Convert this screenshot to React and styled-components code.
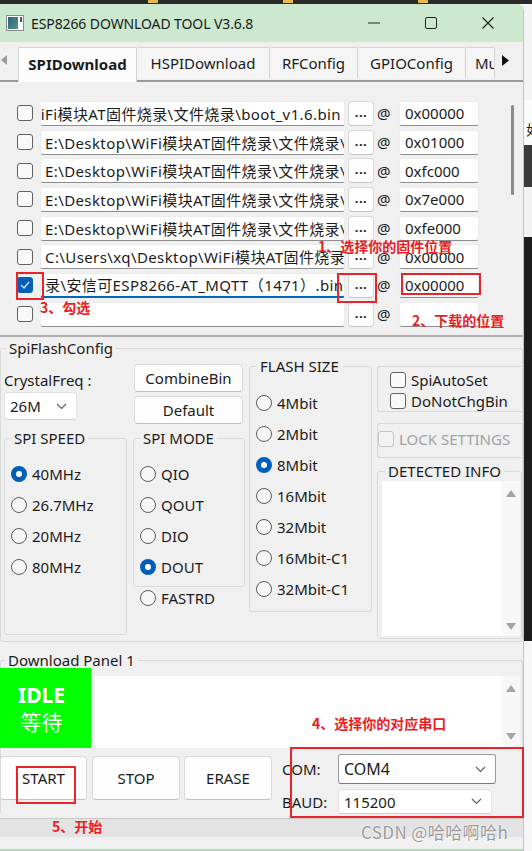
import React from 'react'
import styled, { createGlobalStyle } from 'styled-components'

const GlobalStyle = createGlobalStyle`
  * { box-sizing: border-box; }
  html, body { margin: 0; padding: 0; background: #f3f3f3; }
  body {
    font-family: "Noto Sans", "Noto Sans CJK SC", sans-serif;
    color: #1b1b1b;
  }
`

const Page = styled.div`
  position: relative;
  width: 532px;
  height: 851px;
  overflow: hidden;
  display: flex;
  flex-direction: column;
`

const TopStrip = styled.div`
  height: 4px;
  flex-shrink: 0;
  background: #2b2b2b;
  display: flex;
  gap: 125px;
  padding-left: 148px;
`
const Folder = styled.span`
  width: 10px;
  height: 3px;
  background: #e5b94a;
`

const Desk = styled.div`
  flex: 1;
  display: flex;
`

const Window = styled.div`
  width: 524px;
  flex-shrink: 0;
  display: flex;
  flex-direction: column;
  background: #f0f0f0;
  border-right: 1px solid #a9d4b0;
  border-bottom: 2px solid #b4dbba;
  border-top-right-radius: 8px;
  overflow: hidden;
`

const Side = styled.div`
  flex: 1;
  display: flex;
  flex-direction: column;
  overflow: hidden;
`
const SideBlock = styled.div`
  height: ${p => p.$h}px;
  flex: ${p => (p.$grow ? 1 : 'none')};
  background: ${p => p.$bg};
  font-size: 14px;
  line-height: 20px;
  padding-top: ${p => p.$pt || 0}px;
  padding-left: 2px;
  white-space: nowrap;
`

/* ---------- title bar ---------- */
const TitleBar = styled.div`
  height: 38px;
  flex-shrink: 0;
  display: flex;
  align-items: center;
  padding-left: 6px;
  background: #cce8cf;
  font-size: 14px;
`
const TitleText = styled.span`
  margin-left: 7px;
  letter-spacing: -0.1px;
`
const Controls = styled.div`
  margin-left: auto;
  margin-right: 7px;
  display: flex;
`
const Ctl = styled.div`
  width: 57px;
  height: 38px;
  display: flex;
  align-items: center;
  justify-content: center;
`

/* ---------- tabs ---------- */
const TabBar = styled.div`
  height: 40px;
  flex-shrink: 0;
  display: flex;
  align-items: flex-end;
  border-bottom: 2px solid #9a9a9a;
`
const Arrow = styled.div`
  width: ${p => p.$w}px;
  height: 36px;
  margin-bottom: 2px;
  display: flex;
  align-items: center;
  justify-content: ${p => p.$justify || 'center'};
  padding-left: ${p => p.$pl || 0}px;
`
const Tab = styled.div`
  width: ${p => p.$w}px;
  height: ${p => (p.$active ? 35 : 31)}px;
  margin-bottom: ${p => (p.$active ? -2 : 2)}px;
  padding-bottom: ${p => (p.$active ? 2 : 0)}px;
  display: flex;
  align-items: center;
  justify-content: ${p => (p.$clip ? 'flex-start' : 'center')};
  padding-left: ${p => (p.$clip ? 9 : 0)}px;
  overflow: hidden;
  white-space: nowrap;
  background: ${p => (p.$active ? '#fcfcfc' : '#f5f5f5')};
  border: 1px solid #d3d3d3;
  border-bottom: none;
  border-left: ${p => (p.$first ? '1px solid #d3d3d3' : 'none')};
  border-radius: 2px 2px 0 0;
  font-size: 15px;
  font-weight: ${p => (p.$active ? 700 : 400)};
`

/* ---------- file list ---------- */
const FileList = styled.div`
  height: 255px;
  flex-shrink: 0;
  display: flex;
  border-bottom: 2px solid #b0b0b0;
`
const Rows = styled.div`
  padding-top: 17px;
  padding-left: 17px;
`
const Row = styled.div`
  height: 28.7px;
  display: flex;
  align-items: center;
`
const Check = styled.span`
  width: 16px;
  height: 16px;
  flex-shrink: 0;
  border-radius: 3px;
  border: 1px solid ${p => (p.$on ? '#005fb8' : p.$off ? '#c5c5c5' : '#616161')};
  background: ${p => (p.$on ? '#005fb8' : p.$off ? '#f3f3f3' : '#f9f9f9')};
  display: flex;
  align-items: center;
  justify-content: center;
`
const PathBox = styled.div`
  width: 305px;
  height: 25px;
  margin-left: 7px;
  display: flex;
  align-items: center;
  justify-content: ${p => (p.$end ? 'flex-end' : 'flex-start')};
  padding: 0 ${p => (p.$end ? 3 : 0)}px 0 4px;
  overflow: hidden;
  white-space: nowrap;
  background: #fff;
  border: 1px solid #ececec;
  border-bottom: ${p => (p.$focus ? '2px solid #0067c0' : '1px solid #8d8d8d')};
  border-radius: 3px;
  font-size: 15px;
`
const PathText = styled.span`
  flex-shrink: 0;
  letter-spacing: 0.4px;
`
const DotsButton = styled.div`
  width: 26px;
  height: 25px;
  margin-left: 3px;
  display: flex;
  align-items: center;
  justify-content: center;
  padding-bottom: 3px;
  background: #fdfdfd;
  border: 1px solid #dadada;
  border-bottom-color: #c4c4c4;
  border-radius: 4px;
  font-size: 13px;
  font-weight: 700;
  letter-spacing: 0.5px;
`
const At = styled.span`
  width: 25px;
  padding-left: 3px;
  font-size: 15px;
`
const AddrBox = styled.div`
  width: 80px;
  height: 25px;
  padding-left: 5px;
  display: flex;
  align-items: center;
  background: #fff;
  border: 1px solid #ececec;
  border-bottom-color: #8d8d8d;
  border-radius: 3px;
  font-size: 15px;
`
const ScrollTrack = styled.div`
  margin-left: auto;
  width: 18px;
  padding-top: 23px;
  padding-left: 6px;
`
const Thumb = styled.div`
  width: 3px;
  height: 90px;
  border-radius: 2px;
  background: #8a8a8a;
`

/* ---------- group boxes ---------- */
const Group = styled.fieldset`
  margin: 0;
  margin-top: ${p => p.$mt || 0}px;
  padding: 0;
  min-width: 0;
  width: ${p => (p.$w ? `${p.$w}px` : 'auto')};
  height: ${p => (p.$h ? `${p.$h}px` : 'auto')};
  border: 1px solid #dadada;
  border-bottom: ${p => (p.$open ? 'none' : '1px solid #dadada')};
  border-radius: 3px;
  flex-shrink: 0;
`
const Legend = styled.legend`
  margin-left: ${p => p.$x}px;
  padding: 0 3px;
  font-size: 15px;
  line-height: ${p => p.$lh || 20}px;
  white-space: nowrap;
`

const FlashSection = styled.div`
  height: 308px;
  flex-shrink: 0;
  padding-top: 3px;
`
const Columns = styled.div`
  display: flex;
  align-items: flex-start;
  padding-left: 3px;
`
const Col = styled.div`
  width: ${p => (p.$w ? `${p.$w}px` : 'auto')};
  flex: ${p => (p.$w ? 'none' : 1)};
  margin-left: ${p => p.$ml || 0}px;
  display: flex;
  flex-direction: column;
`
const Label = styled.div`
  margin-top: ${p => p.$mt || 0}px;
  font-size: 15px;
  line-height: 16px;
  white-space: nowrap;
`
const Select = styled.div`
  width: ${p => p.$w}px;
  height: ${p => p.$h}px;
  margin-top: ${p => p.$mt || 0}px;
  display: flex;
  align-items: center;
  justify-content: space-between;
  padding: 0 9px 0 5px;
  background: #fff;
  border: 1px solid ${p => (p.$focus ? '#9a9a9a' : '#e2e2e2')};
  border-bottom-color: ${p => (p.$focus ? '#7a7a7a' : '#d0d0d0')};
  border-radius: 3px;
  font-size: ${p => p.$fs || 15}px;
`
const Button = styled.div`
  width: ${p => p.$w}px;
  height: ${p => p.$h}px;
  margin-top: ${p => p.$mt || 0}px;
  margin-left: ${p => p.$ml || 0}px;
  flex-shrink: 0;
  display: flex;
  align-items: center;
  justify-content: center;
  background: #fdfdfd;
  border: 1px solid #d8d8d8;
  border-bottom-color: #c2c2c2;
  border-radius: 4px;
  font-size: 15px;
`
const OptionList = styled.div`
  padding-top: ${p => p.$pt}px;
  padding-left: ${p => p.$pl}px;
`
const Option = styled.div`
  height: ${p => p.$h || 31}px;
  padding-left: ${p => p.$pl || 0}px;
  display: flex;
  align-items: center;
  gap: 5px;
  font-size: 15px;
  white-space: nowrap;
  color: ${p => (p.$dim ? '#a3a3a3' : '#1b1b1b')};
`
const Dot = styled.span`
  width: 16px;
  height: 16px;
  flex-shrink: 0;
  border-radius: 50%;
  border: ${p => (p.$on ? '5px solid #005fb8' : '1px solid #5c5c5c')};
  background: ${p => (p.$on ? '#fff' : '#f6f6f6')};
`
const Frame = styled.div`
  height: ${p => p.$h}px;
  margin-top: ${p => p.$mt || 0}px;
  padding: ${p => p.$pad || '0'};
  border: 1px solid #dadada;
  border-right: none;
  border-radius: 3px 0 0 3px;
`
const TextPane = styled.div`
  height: ${p => p.$h}px;
  margin: ${p => p.$m || '0'};
  flex: ${p => (p.$grow ? 1 : 'none')};
  display: flex;
  justify-content: flex-end;
  background: #fff;
`
const PaneScroll = styled.div`
  width: 18px;
  display: flex;
  flex-direction: column;
  justify-content: space-between;
  align-items: center;
  padding: ${p => p.$pad};
  background: #f7f7f7;
`

/* ---------- download panel ---------- */
const DownloadSection = styled.div`
  height: 173px;
  flex-shrink: 0;
  padding-top: 7px;
`
const StateRow = styled.div`
  display: flex;
  align-items: flex-start;
`
const StateBox = styled.div`
  width: 91px;
  height: 80px;
  margin-left: -1px;
  display: flex;
  flex-direction: column;
  align-items: center;
  justify-content: center;
  padding-right: 8px;
  background: #00ff00;
  color: #fff;
  font-family: "Noto Sans CJK SC", sans-serif;
  font-size: 21px;
  line-height: 26px;
`
const Bold = styled.span`
  font-weight: 700;
  font-family: "Noto Sans", sans-serif;
`
const ActionRow = styled.div`
  margin-top: 6px;
  display: flex;
  align-items: flex-start;
`
const PortGrid = styled.div`
  margin-left: 10px;
  display: grid;
  grid-template-columns: 56px auto;
  row-gap: 5px;
  align-items: center;
  font-size: 15px;
`

const StatusBar = styled.div`
  height: 19px;
  flex-shrink: 0;
  background: #e3e3e3;
  border-top: 1px solid #c8c8c8;
`
const Filler = styled.div`
  flex: 1;
`

/* ---------- overlays ---------- */
const Note = styled.div`
  position: absolute;
  left: ${p => p.$x}px;
  top: ${p => p.$y}px;
  color: #ec1c24;
  font-family: "Noto Sans CJK SC", sans-serif;
  font-size: 14px;
  font-weight: 700;
  line-height: 18px;
  white-space: nowrap;
`
const Mark = styled.div`
  position: absolute;
  left: ${p => p.$x}px;
  top: ${p => p.$y}px;
  width: ${p => p.$w}px;
  height: ${p => p.$h}px;
  border: 2px solid #e8232b;
`
const Watermark = styled.div`
  position: absolute;
  left: 361px;
  top: 821px;
  font-family: "Noto Sans CJK SC", sans-serif;
  font-size: 17px;
  line-height: 22px;
  color: #9b9b9b;
  letter-spacing: 0.4px;
  text-shadow: 0 0 2px #fff, 0 0 1px #fff;
  white-space: nowrap;
`

const Chevron = () => (
  <svg width="11" height="7" viewBox="0 0 11 7">
    <polyline points="1,1 5.5,5.5 10,1" fill="none" stroke="#606060" strokeWidth="1.2" />
  </svg>
)
const Tri = ({ up }) => (
  <svg width="10" height="7" viewBox="0 0 10 7">
    <polygon points={up ? '0,7 5,0 10,7' : '0,0 10,0 5,7'} fill="#a5a5a5" />
  </svg>
)
const Tick = () => (
  <svg width="10" height="8" viewBox="0 0 10 8">
    <polyline points="1,4 4,7 9,1" fill="none" stroke="#cfe3f7" strokeWidth="1.4" />
  </svg>
)

const files = [
  { path: 'E:\\Desktop\\WiFi模块AT固件烧录\\文件烧录\\boot_v1.6.bin', addr: '0x00000', end: true },
  { path: 'E:\\Desktop\\WiFi模块AT固件烧录\\文件烧录\\', addr: '0x01000' },
  { path: 'E:\\Desktop\\WiFi模块AT固件烧录\\文件烧录\\', addr: '0xfc000' },
  { path: 'E:\\Desktop\\WiFi模块AT固件烧录\\文件烧录\\', addr: '0x7e000' },
  { path: 'E:\\Desktop\\WiFi模块AT固件烧录\\文件烧录\\', addr: '0xfe000' },
  { path: 'C:\\Users\\xq\\Desktop\\WiFi模块AT固件烧录', addr: '0x00000' },
  { path: '录\\安信可ESP8266-AT_MQTT（1471）.bin', addr: '0x00000', on: true, focus: true },
  { path: '', addr: '' },
]

const speeds = ['40MHz', '26.7MHz', '20MHz', '80MHz']
const modes = ['QIO', 'QOUT', 'DIO', 'DOUT']
const sizes = ['4Mbit', '2Mbit', '8Mbit', '16Mbit', '32Mbit', '16Mbit-C1', '32Mbit-C1']

const App = () => (
  <Page>
    <GlobalStyle />
    <TopStrip>
      <Folder />
      <Folder />
      <Folder />
    </TopStrip>
    <Desk>
      <Window>
        <TitleBar>
          <svg width="18" height="16" viewBox="0 0 18 16">
            <defs>
              <linearGradient id="ic" x1="0" y1="0" x2="1" y2="1">
                <stop offset="0" stopColor="#2f5f8f" />
                <stop offset="1" stopColor="#4f9a78" />
              </linearGradient>
            </defs>
            <rect x="0.5" y="0.5" width="17" height="15" fill="#fff" stroke="#8a8a8a" />
            <rect x="2" y="2" width="10" height="12" fill="url(#ic)" />
            <rect x="14" y="2" width="2" height="5" fill="#555" />
          </svg>
          <TitleText>ESP8266 DOWNLOAD TOOL V3.6.8</TitleText>
          <Controls>
            <Ctl>
              <svg width="12" height="12" viewBox="0 0 12 12">
                <line x1="0" y1="6" x2="12" y2="6" stroke="#222" strokeWidth="1" />
              </svg>
            </Ctl>
            <Ctl>
              <svg width="12" height="12" viewBox="0 0 12 12">
                <rect x="0.5" y="0.5" width="11" height="11" rx="1.5" fill="none" stroke="#222" />
              </svg>
            </Ctl>
            <Ctl>
              <svg width="12" height="12" viewBox="0 0 12 12">
                <path d="M0.5 0.5 L11.5 11.5 M11.5 0.5 L0.5 11.5" stroke="#222" strokeWidth="1.1" />
              </svg>
            </Ctl>
          </Controls>
        </TitleBar>

        <TabBar>
          <Arrow $w={18} $justify="flex-start" $pl={1}>
            <svg width="6" height="10" viewBox="0 0 6 10">
              <polygon points="6,0 0,5 6,10" fill="#9c9c9c" />
            </svg>
          </Arrow>
          <Tab $w={119} $active $first>SPIDownload</Tab>
          <Tab $w={133}>HSPIDownload</Tab>
          <Tab $w={88}>RFConfig</Tab>
          <Tab $w={108}>GPIOConfig</Tab>
          <Tab $w={29} $clip>Multi</Tab>
          <Arrow $w={20}>
            <svg width="7" height="11" viewBox="0 0 7 11">
              <polygon points="0,0 7,5.5 0,11" fill="#111" />
            </svg>
          </Arrow>
        </TabBar>

        <FileList>
          <Rows>
            {files.map((f, i) => (
              <Row key={i}>
                <Check $on={f.on}>{f.on && <Tick />}</Check>
                <PathBox $end={f.end} $focus={f.focus}>
                  <PathText>{f.path}</PathText>
                </PathBox>
                <DotsButton>...</DotsButton>
                <At>@</At>
                <AddrBox>{f.addr}</AddrBox>
              </Row>
            ))}
          </Rows>
          <ScrollTrack>
            <Thumb />
          </ScrollTrack>
        </FileList>

        <FlashSection>
          <Group $h={302}>
            <Legend $x={5} $lh={16}>SpiFlashConfig</Legend>
            <Columns>
              <Col $w={123}>
                <Label $mt={16}>CrystalFreq :</Label>
                <Select $w={73} $h={28} $mt={4}>
                  26M
                  <Chevron />
                </Select>
                <Group $mt={8} $h={207}>
                  <Legend $x={6}>SPI SPEED</Legend>
                  <OptionList $pt={10} $pl={6}>
                    {speeds.map((s, i) => (
                      <Option key={s}>
                        <Dot $on={i === 0} />
                        {s}
                      </Option>
                    ))}
                  </OptionList>
                </Group>
              </Col>

              <Col $w={112} $ml={6}>
                <Button $w={109} $h={28} $mt={8} $ml={1}>CombineBin</Button>
                <Button $w={109} $h={28} $mt={4} $ml={1}>Default</Button>
                <Group $mt={4} $h={159}>
                  <Legend $x={6}>SPI MODE</Legend>
                  <OptionList $pt={10} $pl={6}>
                    {modes.map((s, i) => (
                      <Option key={s}>
                        <Dot $on={i === 3} />
                        {s}
                      </Option>
                    ))}
                  </OptionList>
                </Group>
                <Option $h={22} $pl={7}>
                  <Dot />
                  FASTRD
                </Option>
              </Col>

              <Col $w={123} $ml={4}>
                <Group $h={256}>
                  <Legend $x={7}>FLASH SIZE</Legend>
                  <OptionList $pt={11} $pl={6}>
                    {sizes.map((s, i) => (
                      <Option key={s}>
                        <Dot $on={i === 2} />
                        {s}
                      </Option>
                    ))}
                  </OptionList>
                </Group>
              </Col>

              <Col $ml={5}>
                <Frame $h={46} $mt={10} $pad="2px 0 0 12px">
                  <Option $h={21}>
                    <Check />
                    SpiAutoSet
                  </Option>
                  <Option $h={21}>
                    <Check />
                    DoNotChgBin
                  </Option>
                </Frame>
                <Frame $h={35} $mt={11}>
                  <Option $h={29} $dim>
                    <Check $off />
                    LOCK SETTINGS
                  </Option>
                </Frame>
                <Group $mt={3} $h={178}>
                  <Legend $x={7}>DETECTED INFO</Legend>
                  <TextPane $h={155} $m="0 1px 0 4px">
                    <PaneScroll $pad="9px 0 6px">
                      <Tri up />
                      <Tri />
                    </PaneScroll>
                  </TextPane>
                </Group>
              </Col>
            </Columns>
          </Group>
        </FlashSection>

        <DownloadSection>
          <Group $open>
            <Legend $x={4} $lh={16}>Download Panel 1</Legend>
            <StateRow>
              <StateBox>
                <Bold>IDLE</Bold>
                等待
              </StateBox>
              <TextPane $h={72} $m="8px 2px 0 4px" $grow>
                <PaneScroll $pad="9px 0 8px">
                  <Tri up />
                  <Tri />
                </PaneScroll>
              </TextPane>
            </StateRow>
            <ActionRow>
              <Button $w={87} $h={44} $mt={2} $ml={-1}>START</Button>
              <Button $w={88} $h={44} $mt={2} $ml={5}>STOP</Button>
              <Button $w={88} $h={44} $mt={2} $ml={4}>ERASE</Button>
              <PortGrid>
                <span>COM:</span>
                <Select $w={158} $h={30} $focus $fs={16}>
                  COM4
                  <Chevron />
                </Select>
                <span>BAUD:</span>
                <Select $w={154} $h={25}>
                  115200
                  <Chevron />
                </Select>
              </PortGrid>
            </ActionRow>
          </Group>
        </DownloadSection>

        <StatusBar />
        <Filler />
      </Window>

      <Side>
        <SideBlock $h={96} $bg="#f4f4f4" />
        <SideBlock $h={45} $bg="#fbfbfb" $pt={20}>如</SideBlock>
        <SideBlock $h={42} $bg="#3a3a3a" />
        <SideBlock $h={50} $bg="#f2f2f2" />
        <SideBlock $h={404} $bg="#1c1c1c" />
        <SideBlock $grow $bg="#f7f7f7" />
      </Side>
    </Desk>

    <Note $x={318} $y={237}>1、选择你的固件位置</Note>
    <Note $x={412} $y={311}>2、下载的位置</Note>
    <Note $x={40} $y={298}>3、勾选</Note>
    <Note $x={312} $y={714}>4、选择你的对应串口</Note>
    <Note $x={52} $y={817}>5、开始</Note>
    <Mark $x={16} $y={272} $w={28} $h={28} />
    <Mark $x={337} $y={273} $w={40} $h={30} />
    <Mark $x={401} $y={273} $w={80} $h={22} />
    <Mark $x={16} $y={766} $w={60} $h={38} />
    <Mark $x={290} $y={747} $w={234} $h={71} />
    <Watermark>CSDN @哈哈啊哈h</Watermark>
  </Page>
)

export default App
